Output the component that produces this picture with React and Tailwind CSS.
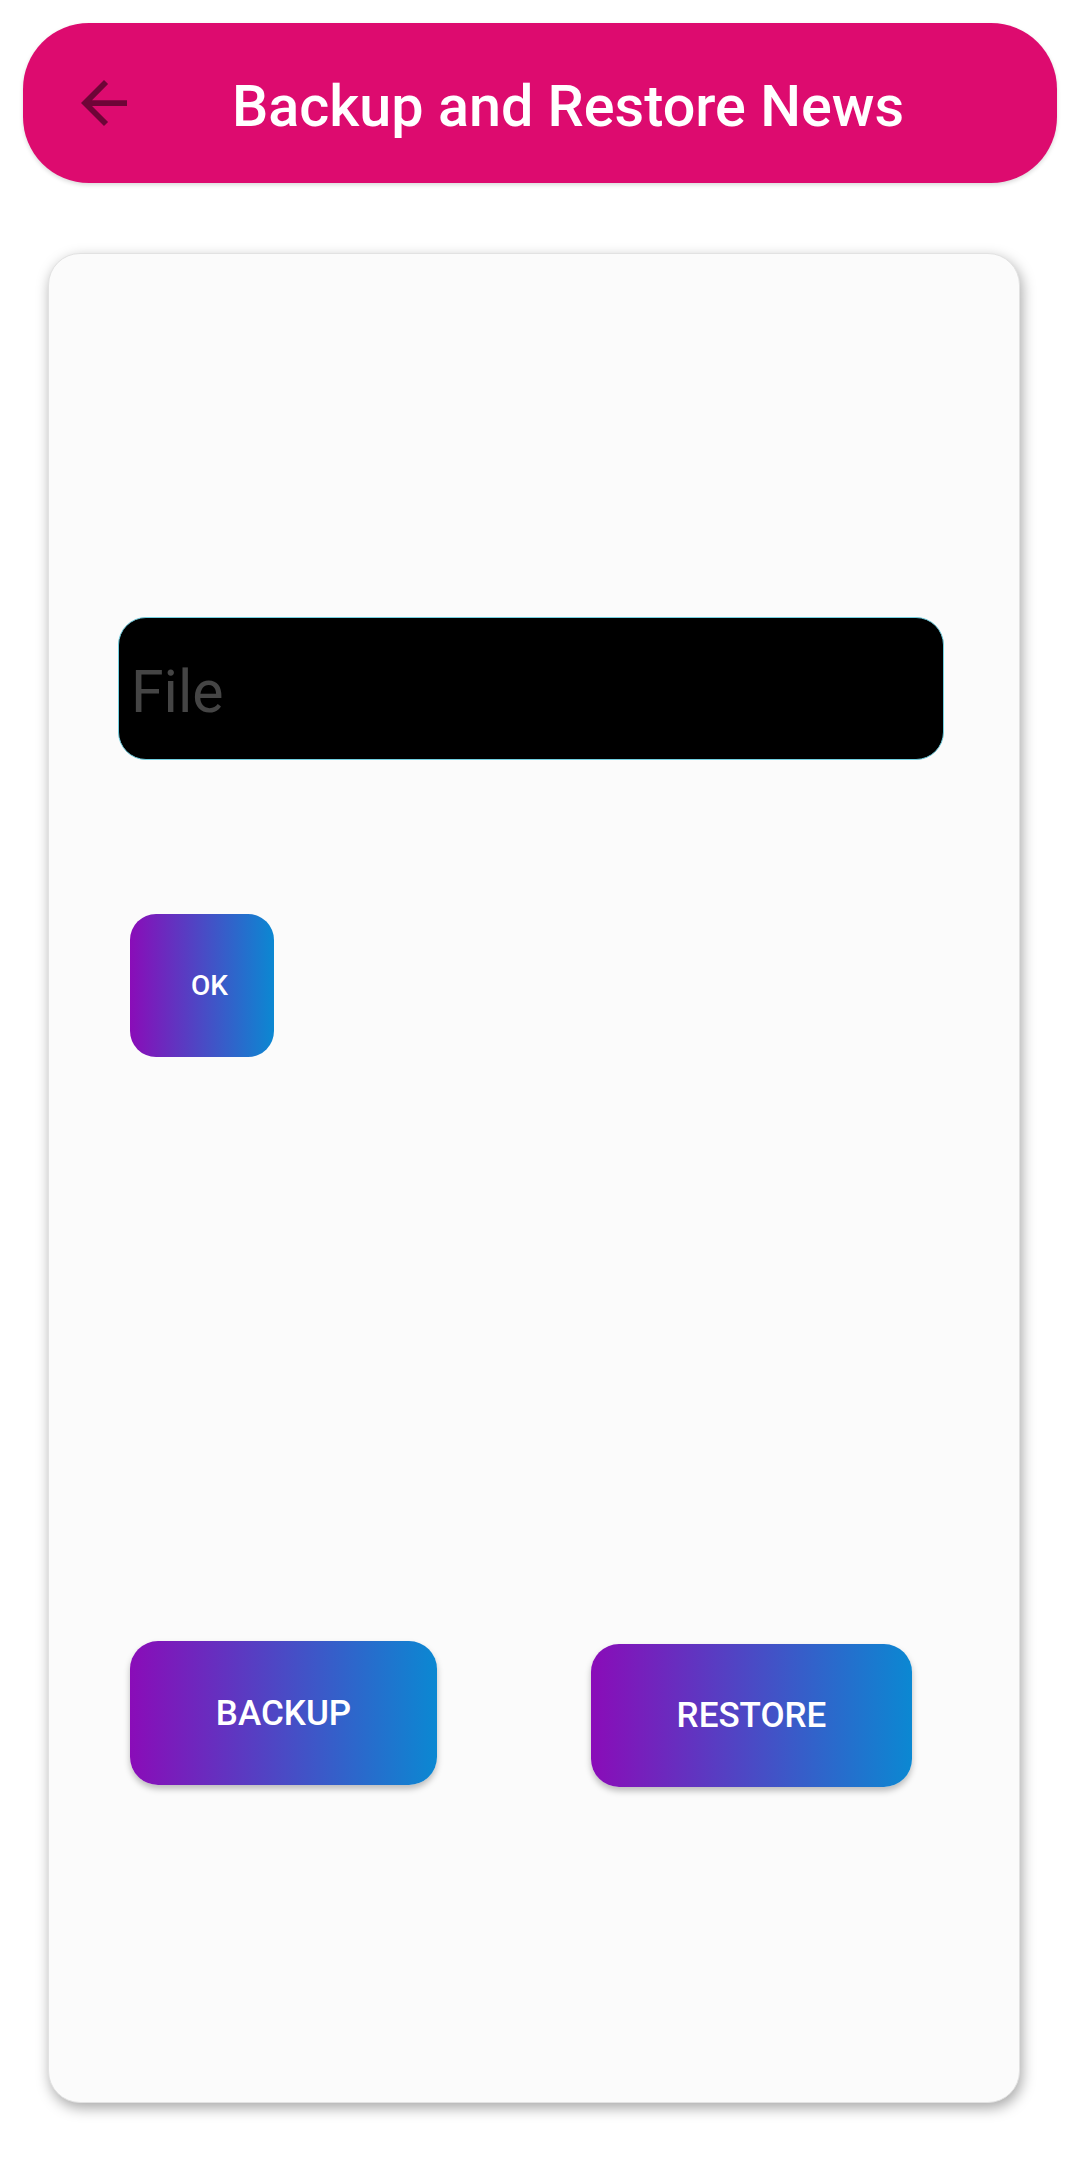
import React from "react";

const BackArrow = () => (
  <svg viewBox="4 4 16 16" className="w-[46px] h-[46px] shrink-0">
    <path
      d="M20 11H7.83l5.59-5.59L12 4l-8 8 8 8 1.41-1.41L7.83 13H20v-2z"
      fill="rgba(0,0,0,0.5)"
    />
  </svg>
);

export default function App() {
  return (
    <div className="min-h-[2160px] bg-white font-['Roboto',sans-serif] px-[23px] pt-[23px]">
      {/* top bar */}
      <header className="h-[160px] rounded-[66px] bg-[#dd0b6f] flex items-center pl-[58px] shadow-[0_2px_4px_rgba(0,0,0,0.15)]">
        <BackArrow />
        <h1 className="ml-[105px] mt-[7px] text-[57.5px] font-medium leading-none text-white whitespace-nowrap">
          Backup and Restore News
        </h1>
      </header>

      {/* card */}
      <main className="mt-[70px] ml-[25px] w-[972px] h-[1850px] rounded-[32px] bg-[#fbfbfb] border border-[#e2e2e2] shadow-[2px_5px_14px_rgba(0,0,0,0.35)] flex flex-col pt-[363px]">
        <div className="ml-[69px] w-[826px] h-[143px] rounded-[28px] bg-black border border-[#72cfe0] flex items-center pl-[12px]">
          <span className="mt-[6px] text-[59px] leading-none text-[#454545]">
            File
          </span>
        </div>

        <button className="mt-[154px] ml-[81px] w-[144px] h-[143px] rounded-[26px] bg-[linear-gradient(to_right,#8a0cb8,#0b88d2)] flex items-center justify-center pl-[15px]">
          <span className="text-[28px] font-medium leading-none text-white">
            OK
          </span>
        </button>

        <div className="mt-[584px] flex items-start">
          <button className="ml-[81px] w-[307px] h-[144px] rounded-[28px] bg-[linear-gradient(to_right,#8a0cb8,#0b88d2)] shadow-[0_4px_6px_rgba(0,0,0,0.25)] flex items-center justify-center">
            <span className="text-[35px] font-medium leading-none text-white">
              BACKUP
            </span>
          </button>
          <button className="ml-[154px] mt-[3px] w-[321px] h-[143px] rounded-[28px] bg-[linear-gradient(to_right,#8a0cb8,#0b88d2)] shadow-[0_4px_6px_rgba(0,0,0,0.25)] flex items-center justify-center">
            <span className="text-[35px] font-medium leading-none text-white">
              RESTORE
            </span>
          </button>
        </div>
      </main>
    </div>
  );
}
